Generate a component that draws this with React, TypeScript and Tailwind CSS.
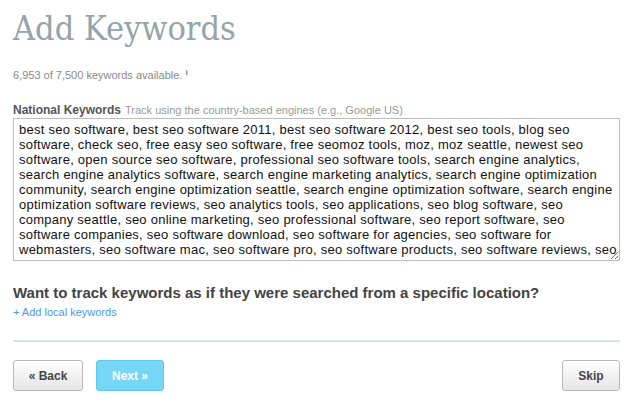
export default function App() {
  const keywords =
    "best seo software, best seo software 2011, best seo software 2012, best seo tools, blog seo software, check seo, free easy seo software, free seomoz tools, moz, moz seattle, newest seo software, open source seo software, professional seo software tools, search engine analytics, search engine analytics software, search engine marketing analytics, search engine optimization community, search engine optimization seattle, search engine optimization software, search engine optimization software reviews, seo analytics tools, seo applications, seo blog software, seo company seattle, seo online marketing, seo professional software, seo report software, seo software companies, seo software download, seo software for agencies, seo software for webmasters, seo software mac, seo software pro, seo software products, seo software reviews, seo tools";

  return (
    <div className="w-[635px] h-[407px] bg-white px-[13px] font-['Liberation_Sans',Arial,sans-serif] overflow-hidden">
      <h1 className="pt-[8px] text-[34px] leading-[40px] text-[#95a4a8] font-['DejaVu_Serif_Condensed','DejaVu_Serif',serif] font-light">
        Add Keywords
      </h1>

      <p className="mt-[20px] text-[11px] leading-[14px] text-[#8a8a8a]">
        6,953 of 7,500 keywords available.{" "}
        <sup className="text-[8px] font-bold text-[#777]">i</sup>
      </p>

      <div className="mt-[21px] flex items-baseline gap-[4px] leading-[14px]">
        <span className="text-[12px] font-bold text-[#555]">National Keywords</span>
        <span className="text-[11px] text-[#999]">Track using the country-based engines (e.g., Google US)</span>
      </div>

      <textarea
        readOnly
        defaultValue={keywords}
        className="mt-[1px] block w-[607px] h-[143px] border border-[#bdbdbd] pl-[5px] pr-0 pt-[3px] text-[13px] leading-[15px] tracking-[0.25px] text-[#111] resize-y outline-none overflow-hidden font-['Liberation_Sans',Arial,sans-serif]"
      />

      <h2 className="mt-[23px] text-[15px] leading-[18px] font-bold text-[#444]">
        Want to track keywords as if they were searched from a specific location?
      </h2>
      <a className="block mt-[3px] text-[11px] leading-[14px] text-[#4a9be0]">+ Add local keywords</a>

      <div className="mt-[21px] h-[2px] bg-[#dbe3df] w-[607px]" />

      <div className="mt-[18px] flex items-center w-[607px]">
        <button className="w-[70px] h-[31px] rounded-[3px] border border-[#b9b9b9] bg-gradient-to-b from-white to-[#e6e6e6] text-[12px] font-bold text-[#444]">
          « Back
        </button>
        <button className="ml-[13px] w-[68px] h-[31px] rounded-[3px] border border-[#62c6ea] bg-[#76d6f5] text-[12px] font-bold text-white">
          Next »
        </button>
        <button className="ml-auto w-[58px] h-[31px] rounded-[3px] border border-[#b9b9b9] bg-gradient-to-b from-white to-[#e6e6e6] text-[12px] font-bold text-[#444]">
          Skip
        </button>
      </div>
    </div>
  );
}
